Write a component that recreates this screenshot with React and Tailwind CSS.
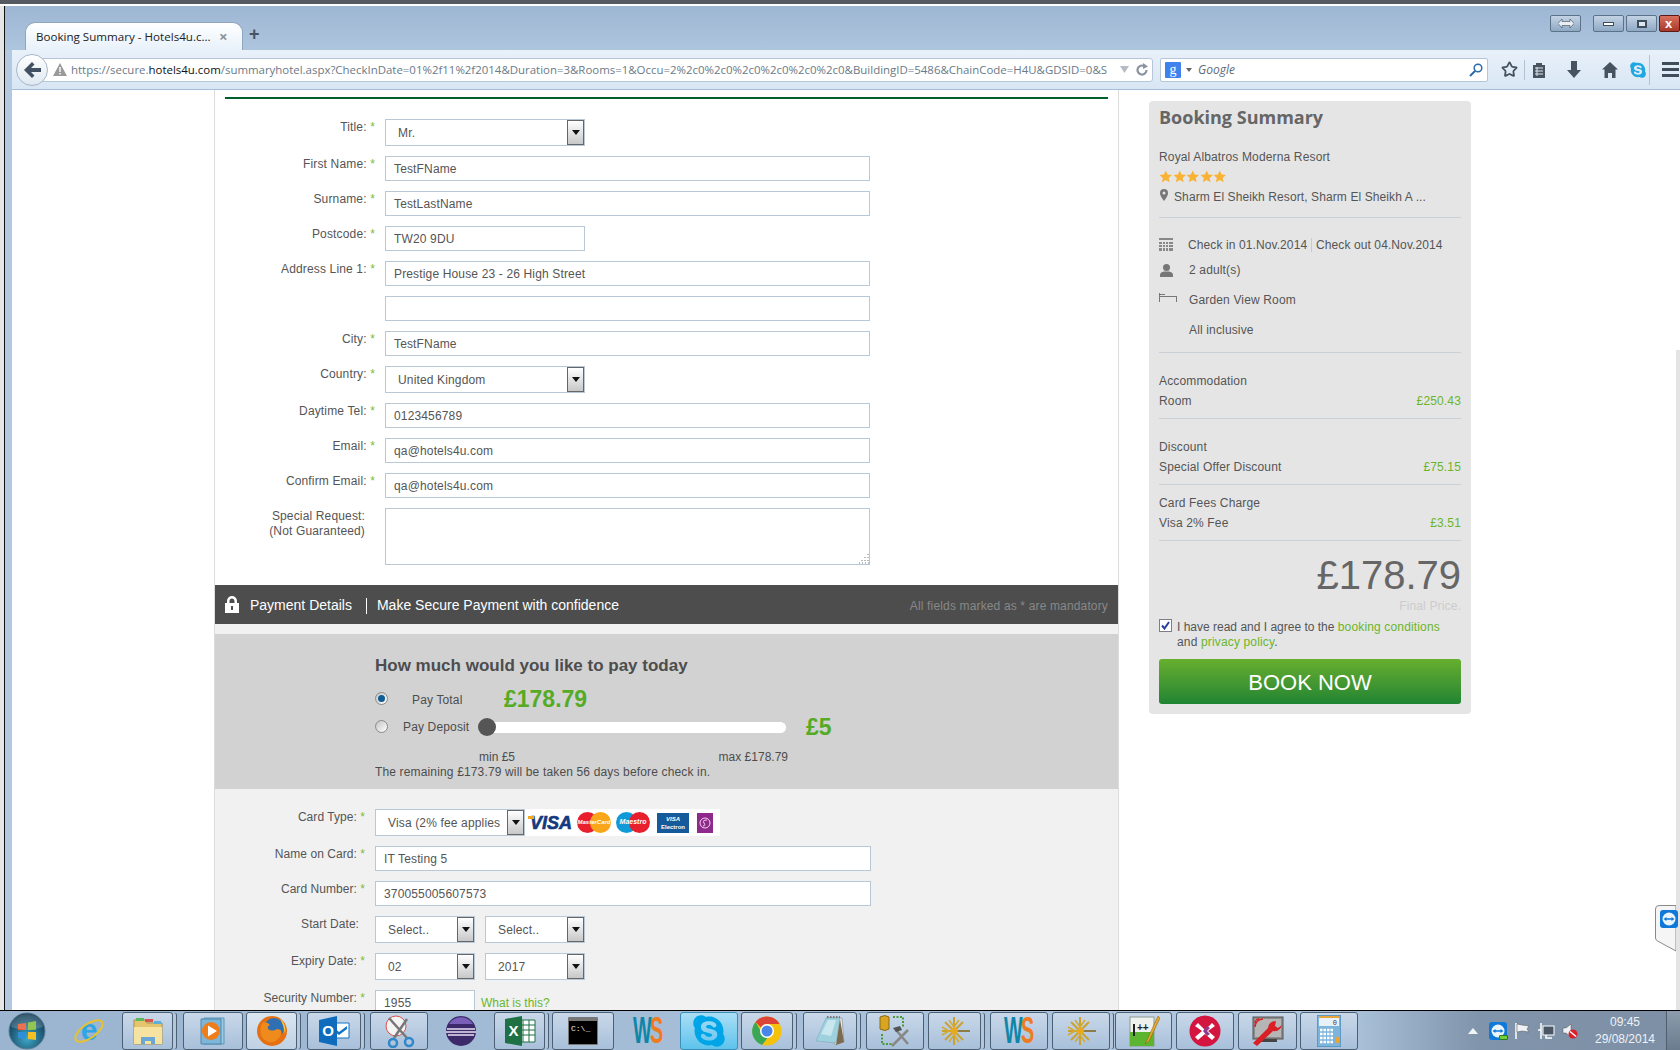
import { Star } from "lucide-react";
import { FaSkype } from "react-icons/fa";

const Arrow = () => (
  <svg width="8" height="5" viewBox="0 0 8 5"><path d="M0 0h8L4 5z" fill="#111" /></svg>
);

const Field = ({ value = "", className = "w-[485px]" }) => (
  <div className={`h-[25px] border border-[#b9c8d6] bg-white pl-[8px] text-[12px] leading-[25px] tracking-[0.15px] text-[#555] ${className}`}>
    {value}
  </div>
);

const Dropdown = ({ value, className = "w-[200px]" }) => (
  <div className={`flex h-[27px] items-center border border-[#b9c8d6] bg-white text-[12px] tracking-[0.15px] text-[#555] ${className}`}>
    <span className="min-w-0 flex-1 overflow-hidden pl-[12px] pr-[6px]">
      <span className="block overflow-hidden whitespace-nowrap">{value}</span>
    </span>
    <span className="flex h-full w-[17px] shrink-0 items-center justify-center border border-[#666] bg-linear-to-b from-white to-[#c8c8c8]">
      <Arrow />
    </span>
  </div>
);

const Req = () => <span className="text-[#7dbb3c]"> *</span>;

const Row = ({ label, req = true, children }) => (
  <div className="flex gap-[10px]">
    <div className={`w-[160px] pt-[1px] text-right text-[12px] leading-[15px] tracking-[0.15px] text-[#555] ${req ? "" : "pr-[10px]"}`}>
      {label}
      {req && <Req />}
    </div>
    {children}
  </div>
);

const CardRow = ({ label, req = true, children }) => (
  <div className="flex gap-[10px]">
    <div className={`w-[150px] pt-[1px] text-right text-[12px] leading-[15px] tracking-[0.05px] text-[#555] ${req ? "" : "pr-[6px]"}`}>
      {label}
      {req && <Req />}
    </div>
    {children}
  </div>
);

const Rule = ({ className = "" }) => <div className={`h-px bg-[#c9d0d8] ${className}`} />;

const PriceLine = ({ name, price, className = "" }) => (
  <div className={`flex h-[16px] justify-between leading-[16px] ${className}`}>
    <span>{name}</span>
    <span className="text-[#6bb52a]">{price}</span>
  </div>
);

const Radio = ({ on }) => (
  <span className="flex h-[13px] w-[13px] items-center justify-center rounded-full border border-[#8a8a8a] bg-linear-to-br from-[#c4c4c4] to-white">
    {on && <span className="h-[7px] w-[7px] rounded-full bg-[#0f5d94]" />}
  </span>
);

/* ---- taskbar icons ---- */
const Orb = () => (
  <svg width="38" height="38" viewBox="0 0 38 38">
    <defs>
      <radialGradient id="orb" cx="50%" cy="70%" r="70%">
        <stop offset="0" stopColor="#3fa9c9" />
        <stop offset="1" stopColor="#0c2f48" />
      </radialGradient>
    </defs>
    <circle cx="19" cy="19" r="18" fill="url(#orb)" stroke="#5d7f99" />
    <path d="M10 12l8-1v7h-8z" fill="#e8532b" />
    <path d="M20 10.500l8-1.500v9h-8z" fill="#7cb82f" />
    <path d="M10 20h8v7l-8-1z" fill="#2f8fd8" />
    <path d="M20 20h8v8l-8-1z" fill="#f5c024" />
    <path d="M3 15a16 13 0 0 1 32 0q-16 6-32 0z" fill="#fff" opacity=".18" />
  </svg>
);

const IE = () => (
  <svg width="34" height="34" viewBox="0 0 34 34">
    <text x="17" y="26" textAnchor="middle" fontSize="30" fontFamily="Liberation Sans" fill="#2ea6e6" fontWeight="700">e</text>
    <ellipse cx="17" cy="17" rx="16" ry="7" transform="rotate(-35 17 17)" fill="none" stroke="#e8c22c" strokeWidth="2" />
  </svg>
);

const Folder = () => (
  <svg width="34" height="34" viewBox="0 0 34 34">
    <path d="M3 6h11l2 3h15v21H3z" fill="#e4c56d" stroke="#a98f45" />
    <path d="M5 4h8v3H5z" fill="#5cb85c" />
    <path d="M14 5h8v3h-8z" fill="#d9534f" />
    <path d="M23 7h7v3h-7z" fill="#5bb0de" />
    <path d="M3 13h28v17H3z" fill="#f6e3a1" />
    <path d="M10 30v-7h14v7h-4v-3h-6v3z" fill="#6aa7d6" />
  </svg>
);

const Wmp = () => (
  <svg width="30" height="30" viewBox="0 0 30 30">
    <path d="M6 2h20v26H6z" fill="#9ccbe6" stroke="#5f93b5" />
    <path d="M3 3h20v25H3z" fill="#7db6d9" stroke="#4f86aa" />
    <circle cx="13" cy="15" r="9" fill="#ef7d1a" />
    <path d="M10 9.500l9 5.500-9 5.500z" fill="#fff" />
  </svg>
);

const Firefox = () => (
  <svg width="32" height="32" viewBox="0 0 32 32">
    <circle cx="16" cy="16" r="15" fill="#e66f12" />
    <circle cx="18" cy="13" r="10" fill="#2f6fb4" />
    <path d="M6 8q5-2 8 2-3 1-2 4 4 3 9 0 6 0 4 6-5 9-13 7Q1 22 6 8z" fill="#ef8a1d" />
    <path d="M24 3q7 7 5 16-1-8-5-16z" fill="#f7c53a" />
  </svg>
);

const Outlook = () => (
  <svg width="32" height="32" viewBox="0 0 32 32">
    <path d="M13 8h18v15H13z" fill="#fff" stroke="#1272c4" />
    <path d="M15 12l6 5 8-6v3l-8 6-6-5z" fill="#1272c4" />
    <path d="M1 5l18-4v30L1 27z" fill="#0f6cbd" />
    <text x="10" y="21" textAnchor="middle" fontSize="15" fontWeight="700" fill="#fff" fontFamily="Liberation Sans">O</text>
  </svg>
);

const Snip = () => (
  <svg width="32" height="34" viewBox="0 0 32 34">
    <circle cx="13" cy="12" r="10" fill="#f4f4f4" stroke="#d9534f" />
    <path d="M6 4l18 20M24 5L11 24" stroke="#777" strokeWidth="2.500" />
    <circle cx="26" cy="28" r="4" fill="none" stroke="#2f86c9" strokeWidth="2.500" />
    <circle cx="10" cy="29" r="4" fill="none" stroke="#2f86c9" strokeWidth="2.500" />
  </svg>
);

const Eclipse = () => (
  <svg width="32" height="32" viewBox="0 0 32 32">
    <circle cx="16" cy="16" r="15" fill="#3c2a6b" />
    <path d="M4 9a14 14 0 0 1 24 0z" fill="#7a5fb8" />
    <path d="M2 14h28M1 17h30M3 20h26" stroke="#e8e4f5" strokeWidth="1.500" />
  </svg>
);

const Excel = () => (
  <svg width="32" height="32" viewBox="0 0 32 32">
    <path d="M14 5h17v22H14z" fill="#fff" stroke="#1e7145" />
    <path d="M19 5v22M25 5v22M14 10h17M14 15h17M14 20h17" stroke="#1e7145" />
    <path d="M1 4l17-3v30L1 28z" fill="#1e7145" />
    <text x="9.500" y="21" textAnchor="middle" fontSize="15" fontWeight="700" fill="#fff" fontFamily="Liberation Sans">X</text>
  </svg>
);

const Cmd = () => (
  <svg width="30" height="28" viewBox="0 0 30 28">
    <rect width="30" height="28" rx="1" fill="#777" />
    <rect x="1" y="4" width="28" height="23" fill="#000" />
    <text x="3" y="14" fontSize="8" fill="#eee" fontFamily="Liberation Mono">C:\_</text>
  </svg>
);

const Ws = () => (
  <span className="flex w-[32px] scale-x-[0.55] justify-center text-[36px] leading-[36px] font-bold">
    <span className="text-[#0f86a8]">W</span>
    <span className="-ml-[3px] text-[#ee7a22]">S</span>
  </span>
);

const Chrome = () => (
  <svg width="30" height="30" viewBox="0 0 30 30">
    <circle cx="15" cy="15" r="14.500" fill="#f4c20d" />
    <path d="M15 .5A14.500 14.500 0 0 1 27.600 8H15a7 7 0 0 0-6 3.500L3.500 6A14.500 14.500 0 0 1 15 .5z" fill="#db4437" />
    <path d="M3.500 6L9 15.500a7 7 0 0 0 6.500 6.500L10 29A14.500 14.500 0 0 1 3.500 6z" fill="#3aa757" />
    <circle cx="15" cy="15" r="7" fill="#fff" />
    <circle cx="15" cy="15" r="5.500" fill="#4a86e8" />
  </svg>
);

const Notepad = () => (
  <svg width="32" height="32" viewBox="0 0 32 32">
    <path d="M12 3h16l2 24-9 3z" fill="#f0f2f4" stroke="#9aa5ad" />
    <path d="M12 3h14l-4 25L2 26z" fill="#9fd0de" stroke="#6fa3b5" strokeWidth=".5" />
    <path d="M7 19L14 5h8L17 21z" fill="#c8e6ee" />
    <path d="M26 4l4 23-8 3z" fill="#7b6a4f" />
    <path d="M13 2h13" stroke="#777" strokeWidth="2" strokeDasharray="1.500 1.500" />
  </svg>
);

const Tools = () => (
  <svg width="34" height="34" viewBox="0 0 34 34">
    <path d="M2 3q5-3 9 0v12q-4 3-9 0z" fill="#d9a520" stroke="#8a6a14" />
    <path d="M15 3h10v10M4 20v10h10" fill="none" stroke="#4a9a3a" strokeWidth="2" strokeDasharray="2 1.500" />
    <path d="M14 32l16-16M18 16l12 14" stroke="#888" strokeWidth="2.500" />
    <path d="M15 14l7-2 2 4-6 2z" fill="#555" />
  </svg>
);

const Spark = () => (
  <svg width="32" height="32" viewBox="0 0 32 32">
    <path d="M15 2v28M3 16h27M6 7l18 18M6 25L24 7" stroke="#c9a233" strokeWidth="2" />
    <path d="M3 12l7 4-7 4M10 5l5 7 5-7M10 27l5-7 5 7" fill="none" stroke="#d6a92c" strokeWidth="1.500" />
    <circle cx="15" cy="16" r="3.500" fill="#e8a91e" />
    <path d="M19 16h12" stroke="#8d7c45" strokeWidth="2" />
  </svg>
);

const NotepadPP = () => (
  <svg width="32" height="34" viewBox="0 0 32 34">
    <rect x="2" y="3" width="24" height="29" fill="#eef1ee" stroke="#8b9a8b" />
    <rect x="2" y="18" width="24" height="14" fill="#5cb531" />
    <text x="9" y="17" fontSize="10" fontWeight="700" fill="#222" fontFamily="Liberation Sans">++</text>
    <path d="M6 10v12" stroke="#222" strokeWidth="2" />
    <path d="M30 2L19 26l-2 4 4-3L32 4z" fill="#e8a92a" stroke="#7a5a12" strokeWidth=".5" />
  </svg>
);

const RedX = () => (
  <svg width="32" height="32" viewBox="0 0 32 32">
    <circle cx="16" cy="16" r="15.500" fill="#d3153f" />
    <path d="M9 8l7 7 7-7 3 3-7 5 7 6-3 3-7-6-7 6-3-3 7-6-7-5z" fill="#fff" />
    <path d="M18 11l-4 5 4 5 3-2-3-3 3-3z" fill="#8d3a8d" />
  </svg>
);

const Wrench = () => (
  <svg width="34" height="32" viewBox="0 0 34 32">
    <rect x="2" y="2" width="30" height="22" fill="#8c8c8c" stroke="#555" />
    <rect x="4" y="4" width="26" height="18" fill="#b5b5b5" />
    <rect x="10" y="24" width="16" height="3" fill="#444" />
    <path d="M4 12a8 8 0 0 1 8-8M4 8a4 4 0 0 1 4-4" fill="none" stroke="#d92027" strokeWidth="1.500" />
    <path d="M2 28l4 3 16-15q7 1 9-6l-4 3-3-2 1-5q-7 0-8 7z" fill="#d92027" />
  </svg>
);

const Calc = () => (
  <svg width="24" height="32" viewBox="0 0 24 32">
    <rect width="24" height="32" rx="1" fill="#7db4dc" stroke="#3f7fae" />
    <rect x="2" y="3" width="20" height="8" fill="#e8f1f8" />
    <rect x="2" y="1" width="20" height="2" fill="#e8a33c" />
    <text x="20" y="10" textAnchor="end" fontSize="7" fill="#335" fontFamily="Liberation Mono">0</text>
    <path d="M3 15h14M3 19h14M3 23h14M3 27h14" stroke="#fff" strokeWidth="2.500" strokeDasharray="2.500 1" />
    <path d="M19 22h3v6h-3z" fill="#e8a33c" />
  </svg>
);

const TvMark = ({ size = 18 }) => (
  <svg width={size} height={size} viewBox="0 0 18 18">
    <rect width="18" height="18" rx="3" fill="#0e79d8" />
    <circle cx="9" cy="9" r="6.500" fill="#eaf4fd" />
    <path d="M3.500 9l3-2v1.200h5V7l3 2-3 2V9.800h-5V11z" fill="#0e79d8" />
  </svg>
);

const frame = "border border-[#4b5f75] bg-linear-to-b from-[#c9d8e9] to-[#a8c0da]";
const stacked = "shadow-[4px_0_0_-1px_#b3c6da,5px_0_0_-1px_#4b5f75]";
const plain = "";

const taskItems = [
  { box: "ml-[8px] w-[38px]", style: plain, icon: <Orb /> },
  { box: "ml-[24px] w-[38px]", style: plain, icon: <IE /> },
  { box: "ml-[14px] w-[51px]", style: `${frame} ${stacked}`, icon: <Folder /> },
  { box: "ml-[10px] w-[60px]", style: frame, icon: <Wmp /> },
  { box: "ml-[3px] w-[51px]", style: `border border-[#4b5f75] bg-linear-to-b from-[#dbe6f2] to-[#bfd1e4] ${stacked}`, icon: <Firefox /> },
  { box: "ml-[10px] w-[54px]", style: `${frame} ${stacked}`, icon: <Outlook /> },
  { box: "ml-[9px] w-[58px]", style: frame, icon: <Snip /> },
  { box: "ml-[8px] w-[50px]", style: plain, icon: <Eclipse /> },
  { box: "ml-[8px] w-[51px]", style: `${frame} ${stacked}`, icon: <Excel /> },
  { box: "ml-[7px] w-[62px]", style: frame, icon: <Cmd /> },
  { box: "ml-[3px] w-[61px]", style: plain, icon: <Ws /> },
  { box: "ml-[2px] w-[58px]", style: "border border-[#3d8fb8] bg-linear-to-b from-[#a9def5] to-[#5cc3ec]", icon: <FaSkype className="text-[36px] text-[#00a5e8]" /> },
  { box: "ml-[3px] w-[52px]", style: `${frame} ${stacked}`, icon: <Chrome /> },
  { box: "ml-[10px] w-[54px]", style: `${frame} ${stacked}`, icon: <Notepad /> },
  { box: "ml-[9px] w-[58px]", style: frame, icon: <Tools /> },
  { box: "ml-[4px] w-[53px]", style: `${frame} ${stacked}`, icon: <Spark /> },
  { box: "ml-[9px] w-[58px]", style: frame, icon: <Ws /> },
  { box: "ml-[4px] w-[58px]", style: `${frame} ${stacked}`, icon: <Spark /> },
  { box: "ml-[5px] w-[57px]", style: frame, icon: <NotepadPP /> },
  { box: "ml-[4px] w-[58px]", style: frame, icon: <RedX /> },
  { box: "ml-[4px] w-[59px]", style: frame, icon: <Wrench /> },
  { box: "ml-[3px] w-[58px]", style: frame, icon: <Calc /> },
];

const Taskbar = () => (
  <div className="flex h-[40px] shrink-0 items-center border-t border-black bg-[linear-gradient(90deg,#9bb4cf_0%,#adc5de_72%,#adc5de_80%,#8094ab_88%,#7d8fa5_100%)]">
    {taskItems.map((item, i) => (
      <div key={i} className={`flex h-[38px] shrink-0 items-center justify-center rounded-[3px] ${item.box} ${item.style}`}>
        {item.icon}
      </div>
    ))}
    <svg className="ml-[110px]" width="10" height="6" viewBox="0 0 10 6"><path d="M5 0l5 6H0z" fill="#f2f5f8" /></svg>
    <div className="relative ml-[11px] h-[18px] w-[18px]">
      <TvMark />
      <span className="absolute -right-[1px] bottom-0 h-[5px] w-[9px] rounded-[1px] border border-[#2d7a20] bg-[#6fd03a]" />
    </div>
    <svg className="ml-[7px]" width="16" height="18" viewBox="0 0 16 18">
      <path d="M2 1v16" stroke="#fff" strokeWidth="1.500" />
      <path d="M3 2l5 1 7 1-2 3 2 3-7-1-5 1z" fill="#eef2f6" stroke="#555" strokeWidth=".5" />
    </svg>
    <svg className="ml-[7px]" width="18" height="18" viewBox="0 0 18 18">
      <rect x="6" y="4" width="11" height="9" fill="#4a5866" stroke="#fff" />
      <path d="M9 13v3h6M4 1v7H1M4 8v9" fill="none" stroke="#fff" strokeWidth="1.500" />
    </svg>
    <svg className="ml-[7px]" width="16" height="18" viewBox="0 0 16 18">
      <path d="M1 6h3l5-4v13l-5-4H1z" fill="#f0f3f6" stroke="#555" strokeWidth=".5" />
      <circle cx="11" cy="12" r="4.500" fill="#d9202a" />
      <path d="M8 9.500l6 5" stroke="#fff" strokeWidth="1.500" />
    </svg>
    <div className="ml-[7px] w-[80px] text-center font-['Liberation_Sans',sans-serif] text-[12px] leading-[17px] text-[#eef2f6]">
      <div>09:45</div>
      <div>29/08/2014</div>
    </div>
    <div className="ml-px h-full w-[14px] border-l border-[#4f5f70] bg-linear-to-b from-[#8c9cad] to-[#6b7c8e]" />
  </div>
);

const Toolbar = () => (
  <div className="ml-[7px] flex h-[40px] shrink-0 items-center border-b border-[#a5bdd6] bg-linear-to-b from-[#e9f1fa] to-[#d8e6f4] pl-[4px]">
    <div className="relative z-10 flex h-[32px] w-[32px] shrink-0 items-center justify-center rounded-full border border-[#a8b8c8] bg-linear-to-b from-white to-[#dfe8f1]">
      <svg width="18" height="16" viewBox="0 0 18 16"><path d="M9 0l2.500 2.500L8 6h10v4H8l3.500 3.500L9 16 1 8z" fill="#3f5163" /></svg>
    </div>
    <div className="-ml-[8px] flex h-[24px] w-[1113px] shrink-0 items-center rounded-r-[3px] border border-[#b4c6d8] bg-white pl-[12px] font-['Open_Sans',sans-serif] text-[11.45px] text-[#6a7a88]">
      <svg className="shrink-0" width="14" height="13" viewBox="0 0 14 13"><path d="M7 0l7 13H0z" fill="#9a9a9a" /><path d="M6.300 4h1.400v5H6.300zM6.300 10h1.400v1.500H6.300z" fill="#fff" /></svg>
      <span className="ml-[4px] w-[1048px] shrink-0 pt-[1px] whitespace-nowrap">
        https://secure.<span className="text-[#111]">hotels4u.com</span>/summaryhotel.aspx?CheckInDate=01%2f11%2f2014&amp;Duration=3&amp;Rooms=1&amp;Occu=2%2c0%2c0%2c0%2c0%2c0%2c0&amp;BuildingID=5486&amp;ChainCode=H4U&amp;GDSID=0&amp;S
      </span>
      <svg className="ml-[1px] shrink-0" width="9" height="7" viewBox="0 0 9 7"><path d="M0 0h9L4.500 7z" fill="#b5bcc4" /></svg>
      <svg className="ml-[6px] shrink-0" width="14" height="14" viewBox="0 0 14 14">
        <path d="M11.500 7A4.500 4.500 0 1 1 9 3" fill="none" stroke="#8a949e" strokeWidth="2.200" />
        <path d="M8 0l5 3.500L8 6z" fill="#8a949e" />
      </svg>
    </div>
    <div className="ml-[7px] flex h-[24px] w-[328px] shrink-0 items-center rounded-[2px] border border-[#b4c6d8] bg-white pl-[4px] pr-[4px]">
      <span className="flex h-[16px] w-[16px] items-center justify-center rounded-[1px] bg-[#3f82ee] font-['Liberation_Serif',serif] text-[14px] leading-none text-white">g</span>
      <svg className="ml-[5px]" width="6" height="4" viewBox="0 0 6 4"><path d="M0 0h6L3 4z" fill="#666" /></svg>
      <span className="ml-[6px] flex-1 pt-[1px] font-['Open_Sans',sans-serif] text-[12px] text-[#5c6b7a] italic">Google</span>
      <svg width="14" height="14" viewBox="0 0 14 14">
        <circle cx="9" cy="5" r="3.800" fill="none" stroke="#2c6aa8" strokeWidth="1.500" />
        <path d="M6 8l-5 5" stroke="#2c6aa8" strokeWidth="2" />
      </svg>
    </div>
    <span className="ml-[11px] flex w-[20px] shrink-0 justify-center"><Star size={17} strokeWidth={2.5} className="text-[#45525f]" /></span>
    <span className="ml-[5px] h-[20px] w-px bg-[#b2c2d2]" />
    <svg className="ml-[4px] w-[20px]" height="16" viewBox="0 0 14 16">
      <path d="M1 3h3V1h6v2h3v13H1z" fill="#47535f" />
      <path d="M3 6h8M3 9h8M3 12h8M5 5v9" stroke="#dfe8f1" />
    </svg>
    <svg className="ml-[15px] w-[20px]" height="17" viewBox="0 0 14 17"><path d="M4 0h6v9h4l-7 8-7-8h4z" fill="#47535f" /></svg>
    <svg className="ml-[16px] w-[20px]" height="16" viewBox="0 0 16 16">
      <path d="M8 0l8 7.500h-2.500V16H10v-5H6v5H2.500V7.500H0z" fill="#47535f" />
    </svg>
    <span className="ml-[8px] flex w-[20px] justify-center"><FaSkype className="text-[18px] text-[#1ea7e1]" /></span>
    <span className="ml-px h-[30px] w-px bg-[#b2c2d2]" />
    <span className="ml-[12px] flex w-[17px] shrink-0 flex-col gap-[3px]">
      <span className="h-[3px] w-[17px] bg-[#3f4c59]" />
      <span className="h-[3px] w-[17px] bg-[#3f4c59]" />
      <span className="h-[3px] w-[17px] bg-[#3f4c59]" />
    </span>
  </div>
);

const WinBtn = ({ className, children }) => (
  <div className={`flex h-[17px] items-center justify-center rounded-[2px] border border-[#5c7288] bg-linear-to-b from-[#c3d3e4] to-[#8fa9c4] ${className}`}>
    {children}
  </div>
);

const Titlebar = () => (
  <div className="flex h-[44px] shrink-0 items-end bg-linear-to-b from-[#9db6d2] to-[#aec5de] pl-[20px]">
    <div className="flex h-[28px] w-[218px] items-center rounded-t-[10px] border border-b-0 border-[#8ea6c0] bg-linear-to-b from-white to-[#e8f1fa] pl-[10px] font-['Open_Sans',sans-serif] text-[11.6px] text-[#222]">
      <span className="w-[183px] whitespace-nowrap">Booking Summary - Hotels4u.c...</span>
      <span className="text-[15px] leading-none font-bold text-[#8a939c]">×</span>
    </div>
    <span className="ml-[6px] mb-[7px] text-[18px] leading-none font-bold text-[#47535f]">+</span>
    <div className="mb-[18px] ml-auto flex">
      <WinBtn className="w-[31px]">
        <svg width="16" height="9" viewBox="0 0 16 9"><path d="M0 4.500L4 0v2.500h8V0l4 4.500L12 9V6.500H4V9z" fill="#e8eef4" stroke="#3f4c59" strokeWidth=".6" /></svg>
      </WinBtn>
      <WinBtn className="ml-[12px] w-[31px]"><span className="h-[4px] w-[11px] border border-[#3f4c59] bg-white" /></WinBtn>
      <WinBtn className="ml-[2px] w-[31px]"><span className="h-[8px] w-[10px] border-2 border-[#3f4c59] bg-[#dfe8f1]" /></WinBtn>
      <WinBtn className="ml-[2px] w-[21px] justify-start border-[#5d1a14] from-[#d9705e] to-[#a8382a] pl-[5px] text-[13px] leading-none font-bold text-white">x</WinBtn>
    </div>
  </div>
);

const VisaLogos = () => (
  <div className="flex h-[27px] w-[195px] shrink-0 items-center bg-white pl-[5px]">
    <span className="relative w-[41px] text-[18px] leading-none font-bold text-[#14397f] italic [-webkit-text-stroke:0.6px_#14397f]">
      VISA
      <span className="absolute top-[2px] -left-[2px] h-[3px] w-[6px] bg-[#f2a71e]" />
    </span>
    <span className="relative ml-[6px] flex h-[21px] w-[34px] items-center justify-center overflow-hidden">
      <span className="absolute left-0 h-[21px] w-[21px] rounded-full bg-[#e8202e]" />
      <span className="absolute right-0 h-[21px] w-[21px] rounded-full bg-[#f9a61a]" />
      <span className="relative text-[6px] font-bold whitespace-nowrap text-white italic">MasterCard</span>
    </span>
    <span className="relative ml-[5px] flex h-[21px] w-[34px] items-center justify-center overflow-hidden">
      <span className="absolute left-0 h-[21px] w-[21px] rounded-full bg-[#0f9bd7]" />
      <span className="absolute right-0 h-[21px] w-[21px] rounded-full bg-[#e8202e]" />
      <span className="relative text-[7px] font-bold text-white italic">Maestro</span>
    </span>
    <span className="ml-[7px] flex h-[20px] w-[32px] flex-col items-center justify-center bg-[#155a9a] text-[6px] leading-[8px] font-bold text-white">
      <span className="italic">VISA</span>
      <span>Electron</span>
    </span>
    <span className="ml-[8px] flex h-[20px] w-[16px] items-center justify-center bg-[#8e2a8b]">
      <svg width="12" height="12" viewBox="0 0 12 12"><circle cx="6" cy="6" r="5" fill="none" stroke="#f3d6ef" /><path d="M8 3Q3 3 5 6t-1 3" fill="none" stroke="#f3d6ef" /></svg>
    </span>
  </div>
);

const PersonalForm = () => (
  <div className="flex flex-col gap-[10px] pt-[20px] pb-[20px]">
    <Row label="Title:"><Dropdown value="Mr." /></Row>
    <Row label="First Name:"><Field value="TestFName" /></Row>
    <Row label="Surname:"><Field value="TestLastName" /></Row>
    <Row label="Postcode:"><Field value="TW20 9DU" className="w-[200px]" /></Row>
    <Row label="Address Line 1:"><Field value="Prestige House 23 - 26 High Street" /></Row>
    <Row label=" " req={false}><Field /></Row>
    <Row label="City:"><Field value="TestFName" /></Row>
    <Row label="Country:"><Dropdown value="United Kingdom" /></Row>
    <Row label="Daytime Tel:"><Field value="0123456789" /></Row>
    <Row label="Email:"><Field value="qa@hotels4u.com" /></Row>
    <Row label="Confirm Email:"><Field value="qa@hotels4u.com" /></Row>
    <Row label={<>Special Request:<br />(Not Guaranteed)</>} req={false}>
      <div className="relative h-[57px] w-[485px] border border-[#b9c8d6] bg-white">
        <svg className="absolute right-0 bottom-0" width="12" height="12" viewBox="0 0 12 12">
          <path d="M11 2v1M8 5v1M11 5v1M5 8v1M8 8v1M11 8v1M2 11h1M5 11h1M8 11h1M11 11h1" stroke="#9aa5ad" strokeWidth="1.500" />
        </svg>
      </div>
    </Row>
  </div>
);

const PaymentBar = () => (
  <div className="flex h-[39px] items-center bg-[#4d4d4d] px-[10px] pt-[2px] text-[14px] text-white">
    <svg className="-mt-[3px]" width="14" height="18" viewBox="0 0 14 18">
      <path d="M2 9V6a5 5 0 0 1 10 0v3H9.500V6a2.500 2.500 0 0 0-5 0v3z" fill="#fff" />
      <path d="M0 8h14v10H0z" fill="#fff" />
      <path d="M6 11h2v4H6z" fill="#4d4d4d" />
    </svg>
    <span className="ml-[11px]">Payment Details</span>
    <span className="ml-[14px] h-[16px] w-px bg-white" />
    <span className="ml-[10px]">Make Secure Payment with confidence</span>
    <span className="ml-auto text-[12px] tracking-[0.15px] text-[#888]">All fields marked as * are mandatory</span>
  </div>
);

const PayToday = () => (
  <div className="h-[155px] bg-[#d2d2d2] pt-[20px] pl-[160px] text-[12px] tracking-[0.15px] text-[#4d4d4d]">
    <div className="h-[24px] text-[17px] leading-[24px] font-bold tracking-normal">How much would you like to pay today</div>
    <div className="mt-[8px] flex h-[26px] items-center">
      <span className="mb-[2px] flex"><Radio on /></span>
      <span className="ml-[24px] w-[92px] pt-[1px]">Pay Total</span>
      <span className="text-[23px] font-bold tracking-normal text-[#55ab26]">£178.79</span>
    </div>
    <div className="mt-[2px] flex h-[26px] items-center">
      <span className="mb-[2px] flex"><Radio /></span>
      <span className="ml-[15px] w-[84px]">Pay Deposit</span>
      <span className="relative h-[11px] w-[299px] rounded-full bg-white">
        <span className="absolute top-[-4px] left-[-9px] h-[18px] w-[18px] rounded-full bg-[#555]" />
      </span>
      <span className="ml-[20px] text-[23px] font-bold tracking-normal text-[#55ab26]">£5</span>
    </div>
    <div className="mt-[10px] flex h-[15px] w-[413px] justify-between pl-[104px] leading-[15px] tracking-normal">
      <span>min £5</span>
      <span>max £178.79</span>
    </div>
    <div className="h-[15px] leading-[15px]">The remaining £173.79 will be taken 56 days before check in.</div>
  </div>
);

const CardForm = () => (
  <div className="flex flex-col gap-[10px] pt-[20px]">
    <CardRow label="Card Type:">
      <div className="flex">
        <Dropdown value="Visa (2% fee applies" className="w-[150px]" />
        <VisaLogos />
      </div>
    </CardRow>
    <CardRow label="Name on Card:"><Field value="IT Testing 5" className="w-[496px]" /></CardRow>
    <CardRow label="Card Number:"><Field value="370055005607573" className="w-[496px]" /></CardRow>
    <CardRow label="Start Date:" req={false}>
      <div className="flex gap-[10px]">
        <Dropdown value="Select.." className="w-[100px]" />
        <Dropdown value="Select.." className="w-[100px]" />
      </div>
    </CardRow>
    <CardRow label="Expiry Date:">
      <div className="flex gap-[10px]">
        <Dropdown value="02" className="w-[100px]" />
        <Dropdown value="2017" className="w-[100px]" />
      </div>
    </CardRow>
    <CardRow label="Security Number:">
      <div className="flex items-start">
        <Field value="1955" className="w-[100px]" />
        <span className="mt-[4px] ml-[6px] text-[12px] text-[#6bb52a]">What is this?</span>
      </div>
    </CardRow>
  </div>
);

const Summary = () => (
  <div className="mt-[11px] ml-[30px] h-[613px] w-[322px] shrink-0 rounded-[4px] bg-[#e5e5e5] px-[10px] pt-[5px] text-[12px] tracking-[0.15px] text-[#555]">
    <div className="h-[22px] font-['Open_Sans',sans-serif] text-[18px] leading-[22px] font-bold tracking-normal text-[#666]">Booking Summary</div>
    <div className="mt-[21px] h-[16px] leading-[16px]">Royal Albatros Moderna Resort</div>
    <div className="mt-[4px] flex h-[14px] items-center">
      {[0, 1, 2, 3, 4].map((i) => (
        <svg key={i} width="13.500" height="13" viewBox="0 0 24 24"><path d="M12 1l3.400 7.400 8 .9-6 5.400 1.700 7.900L12 18.600 4.900 22.600l1.700-7.900-6-5.400 8-.9z" fill="#f9b233" /></svg>
      ))}
    </div>
    <div className="mt-[6px] flex h-[16px] items-center leading-[16px] tracking-[0.1px]">
      <svg className="mb-[5px] ml-[1px]" width="8" height="12" viewBox="0 0 8 12"><path d="M4 0a4 4 0 0 1 4 4q0 3-4 8Q0 7 0 4a4 4 0 0 1 4-4z" fill="#777" /><circle cx="4" cy="4" r="1.500" fill="#e5e5e5" /></svg>
      <span className="ml-[6px]">Sharm El Sheikh Resort, Sharm El Sheikh A ...</span>
    </div>
    <Rule className="mt-[12px]" />
    <div className="mt-[19px] flex h-[16px] items-center leading-[16px] tracking-[0.1px]">
      <svg width="14" height="14" viewBox="0 0 14 14">
        <path d="M0 0h14v2H0z" fill="#888" />
        <path d="M0 4h3v2H0zM4 4h2v2H4zM7 4h2v2H7zM10 4h4v2h-4zM0 7h3v2H0zM4 7h2v2H4zM7 7h2v2H7zM10 7h4v2h-4zM0 10h3v3H0zM4 10h2v3H4zM7 10h2v3H7zM10 10h4v3h-4z" fill="#888" />
      </svg>
      <span className="ml-[15px] w-[123px]">Check in 01.Nov.2014</span>
      <span className="h-[14px] w-px bg-[#c3ccd6]" />
      <span className="ml-[4px]">Check out 04.Nov.2014</span>
    </div>
    <div className="mt-[9px] flex h-[16px] items-center leading-[16px]">
      <svg className="ml-px" width="13" height="13" viewBox="0 0 13 13"><circle cx="6.500" cy="3.500" r="3.500" fill="#777" /><path d="M0 13v-2q0-3 4-3.500h5q4 .5 4 3.500v2z" fill="#777" /></svg>
      <span className="ml-[16px]">2 adult(s)</span>
    </div>
    <div className="mt-[14px] flex h-[16px] leading-[16px]">
      <svg className="mt-[1px]" width="18" height="9" viewBox="0 0 18 9"><path d="M0 0h1v9H0zM1 1h5v1H1zM1 3h17v1H1zM17 4h1v5h-1z" fill="#777" /></svg>
      <span className="ml-[12px]">Garden View Room</span>
    </div>
    <div className="mt-[14px] h-[16px] pl-[30px] leading-[16px]">All inclusive</div>
    <Rule className="mt-[14px]" />
    <div className="mt-[20px] h-[16px] leading-[16px]">Accommodation</div>
    <PriceLine name="Room" price="£250.43" className="mt-[4px]" />
    <Rule className="mt-[9px]" />
    <div className="mt-[20px] h-[16px] leading-[16px]">Discount</div>
    <PriceLine name="Special Offer Discount" price="£75.15" className="mt-[4px]" />
    <Rule className="mt-[9px]" />
    <div className="mt-[10px] h-[16px] leading-[16px]">Card Fees Charge</div>
    <PriceLine name="Visa 2% Fee" price="£3.51" className="mt-[4px]" />
    <Rule className="mt-[9px]" />
    <div className="mt-[11px] h-[46px] text-right text-[40px] leading-[46px] tracking-normal text-[#666]">£178.79</div>
    <div className="h-[16px] text-right leading-[16px] text-[#ccc]">Final Price.</div>
    <div className="mt-[5px] flex">
      <span className="flex h-[13px] w-[13px] shrink-0 items-center justify-center border border-[#7a7f8a] bg-white">
        <svg width="9" height="9" viewBox="0 0 9 9"><path d="M1 4.500l2.500 3L8 1" fill="none" stroke="#2b3f9e" strokeWidth="2" /></svg>
      </span>
      <p className="ml-[5px] pt-[1px] leading-[15px]">
        <span className="tracking-normal">I have read and I agree to the </span><span className="text-[#6bb52a]">booking conditions</span>
        <br />
        and <span className="text-[#6bb52a]">privacy policy</span>.
      </p>
    </div>
    <button className="mt-[9px] h-[45px] w-full rounded-[3px] bg-linear-to-b from-[#66af2e] to-[#1e8432] pt-[2px] text-[22px] tracking-normal text-white">BOOK NOW</button>
  </div>
);

export default function App() {
  return (
    <div className="relative flex h-[1050px] w-[1680px] flex-col overflow-hidden bg-[#e6e6e6] font-['Liberation_Sans',Arial,sans-serif]">
      <div className="h-[6px] shrink-0 border-b-2 border-white bg-[#555a60]" />
      <div className="flex min-h-0 flex-1 pl-[4px]">
        <div className="flex min-w-0 flex-1 flex-col border-l border-[#111] bg-[#b4c9e0]">
          <Titlebar />
          <Toolbar />
          <div className="ml-[7px] flex min-h-0 flex-1 overflow-hidden bg-white">
            <div className="ml-[202px] h-fit w-[905px] shrink-0 border-x border-[#dcdcdc]">
              <div className="mx-[10px] mt-[7px] h-[2px] bg-[#00602b]" />
              <PersonalForm />
              <PaymentBar />
              <div className="bg-[#f1f1f1] pt-[10px] pb-[40px]">
                <PayToday />
                <CardForm />
              </div>
            </div>
            <Summary />
            <div className="ml-auto flex w-[4px] flex-col">
              <div className="h-[260px]" />
              <div className="flex-1 bg-[#e4e4e4]" />
            </div>
          </div>
        </div>
      </div>
      <Taskbar />
      {/* teamviewer side tab */}
      <div className="absolute top-[905px] left-[1655px]">
        <svg width="21" height="53" viewBox="0 0 21 53">
          <path d="M21 .5H4Q.5.5.5 4v29q0 2 2 3L21 46z" fill="#f5f5f5" stroke="#8a8a8a" />
        </svg>
        <div className="absolute top-[5px] left-[5px]"><TvMark /></div>
      </div>
    </div>
  );
}
